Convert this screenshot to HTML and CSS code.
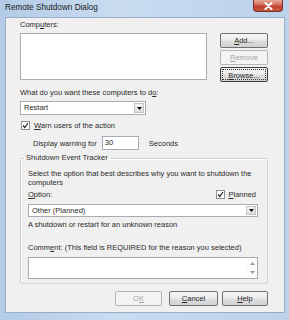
FILE: index.html
```html
<!DOCTYPE html>
<html lang="en">
<head>
  <meta charset="UTF-8" />
  <title>Remote Shutdown Dialog</title>
  <link rel="stylesheet" href="styles.css">
</head>
<body>
  <div class="window">
    <div class="titlebar">
      <span class="title">Remote Shutdown Dialog</span>
      <span class="close">
        <svg width="9" height="8" viewBox="0 0 9 8"><path d="M1.5 1 L7.5 7 M7.5 1 L1.5 7" stroke="#fff" stroke-width="2" stroke-linecap="round"/></svg>
      </span>
    </div>

    <div class="client">
      <div class="label">Comp<u>u</u>ters:</div>
      <div class="computers">
        <div class="listbox"></div>
        <div class="side-buttons">
          <button class="btn"><u>A</u>dd...</button>
          <button class="btn" disabled><u>R</u>emove</button>
          <button class="btn focus"><span><u>B</u>rowse...</span></button>
        </div>
      </div>

      <div class="label what">What do you want these computers to d<u>o</u>:</div>
      <div class="select action">
        <span class="value">Restart</span>
        <span class="arrow"><svg width="5" height="3" viewBox="0 0 5 3"><path d="M0 0 H5 L2.5 3 Z" fill="#000"/></svg></span>
      </div>

      <div class="check-row">
        <span class="checkbox"><svg width="7" height="7" viewBox="0 0 7 7"><path d="M1 3.5 L2.8 5.5 L6 1" fill="none" stroke="#222" stroke-width="1.2"/></svg></span>
        <span><u>W</u>arn users of the action</span>
      </div>

      <div class="warn-row">
        <span>Display warning for</span>
        <span class="textbox">30</span>
        <span>Seconds</span>
      </div>

      <fieldset class="group">
        <legend>Shutdown Event Tracker</legend>
        <div class="inner">
          <div class="desc">Select the option that best describes why you want to shutdown the computers</div>
          <div class="option-row">
            <span><u>O</u>ption:</span>
            <span class="planned">
              <span class="checkbox"><svg width="7" height="7" viewBox="0 0 7 7"><path d="M1 3.5 L2.8 5.5 L6 1" fill="none" stroke="#222" stroke-width="1.2"/></svg></span>
              <span><u>P</u>lanned</span>
            </span>
          </div>
          <div class="select reason">
            <span class="value">Other (Planned)</span>
            <span class="arrow"><svg width="5" height="3" viewBox="0 0 5 3"><path d="M0 0 H5 L2.5 3 Z" fill="#000"/></svg></span>
          </div>
          <div class="label note">A shutdown or restart for an unknown reason</div>
          <div class="label comment-label">Comm<u>e</u>nt: (This field is REQUIRED for the reason you selected)</div>
          <div class="comment">
            <span class="scroll">
              <svg width="5" height="3" viewBox="0 0 5 3"><path d="M0 3 H5 L2.5 0 Z" fill="#9a9a9a"/></svg>
              <svg width="5" height="3" viewBox="0 0 5 3"><path d="M0 0 H5 L2.5 3 Z" fill="#9a9a9a"/></svg>
            </span>
          </div>
        </div>
      </fieldset>

      <div class="footer">
        <button class="btn ok" disabled>O<u>K</u></button>
        <button class="btn cancel"><u>C</u>ancel</button>
        <button class="btn help"><u>H</u>elp</button>
      </div>
    </div>
  </div>
</body>
</html>
```

FILE: styles.css
```css
* {
  box-sizing: border-box;
}
body {
  margin: 0;
  font-family: 'Liberation Sans', Arial, sans-serif;
  font-size: 7.5px;
  color: #2a2a2a;
  background: #fff;
}

u {
  text-underline-offset: 1px;
}

.window {
  width: 289px;
  height: 320px;
  background: linear-gradient(to right, #b3cbe6, #c9dcf0 40%, #bcd2eb);
  overflow: hidden;
}

.titlebar {
  height: 17px;
  display: flex;
  justify-content: space-between;
  align-items: flex-start;
  padding: 0 6px 0 5px;
}

.title {
  font-size: 8.2px;
  line-height: 16px;
  color: #1a1a1a;
}

.close {
  width: 30px;
  height: 12px;
  display: flex;
  align-items: center;
  justify-content: center;
  background: linear-gradient(#e7a896, #d26a5a 45%, #c0402e 55%, #c9573f);
  border: 1px solid #7a3027;
  border-top: none;
  border-radius: 0 0 4px 4px;
}

.client {
  margin-left: 5px;
  width: 280px;
  height: 296px;
  background: #f0f0f0;
  border: 1px solid #98adc6;
  padding: 2px 16px 0 14px;
}

.label {
  line-height: 10px;
  height: 10px;
  white-space: nowrap;
}

.computers {
  display: flex;
  justify-content: space-between;
  margin-top: 3px;
}

.listbox {
  width: 187px;
  height: 47px;
  background: #fff;
  border: 1px solid #abadb3;
}

.side-buttons {
  display: flex;
  flex-direction: column;
  gap: 2px;
  width: 48px;
}

.btn {
  height: 15px;
  width: 48px;
  padding: 0;
  font: inherit;
  color: #2a2a2a;
  border: 1px solid #707070;
  border-radius: 2px;
  background: linear-gradient(#f4f4f4, #ececec 48%, #dfdfdf 52%, #d2d2d2);
}

.btn:disabled {
  color: #a3a3a3;
  border-color: #b5b5b5;
  background: #f4f4f4;
}

.btn.focus {
  border-color: #3a3a3a;
  padding: 1px;
}

.btn.focus span {
  display: block;
  height: 100%;
  line-height: 11px;
  border: 1px dotted #333;
}

.what {
  margin-top: 6px;
}

.select {
  display: flex;
  justify-content: space-between;
  align-items: stretch;
  background: #fff;
  border: 1px solid #a5acb5;
  padding: 1px;
}

.select .value {
  line-height: 10px;
  padding-left: 2px;
}

.select .arrow {
  width: 10px;
  display: flex;
  align-items: center;
  justify-content: center;
  background: linear-gradient(#f5f5f5, #dedede);
  border: 1px solid #c3c3c3;
}

.action {
  margin-top: 3px;
  width: 126px;
  height: 14px;
}

.check-row {
  margin-top: 5px;
  height: 10px;
  display: flex;
  align-items: center;
  gap: 4px;
  padding-left: 1px;
}

.checkbox {
  width: 9px;
  height: 9px;
  display: flex;
  align-items: center;
  justify-content: center;
  background: #fff;
  border: 1px solid #8e8f8f;
}

.warn-row {
  margin-top: 6px;
  height: 14px;
  display: flex;
  align-items: center;
  padding-left: 13px;
}

.textbox {
  width: 37px;
  height: 14px;
  line-height: 12px;
  margin: 0 10px 0 5px;
  padding-left: 2px;
  background: #fff;
  border: 1px solid #a5acb5;
}

.group {
  margin: 3px 0 0;
  padding: 0 5px 4px 3px;
  border: 1px solid #cfd3d6;
  border-radius: 2px;
  box-shadow: inset 1px 1px 0 #fff;
  min-width: 0;
}

.group legend {
  padding: 0 2px;
  line-height: 10px;
}

.inner {
  padding: 6px 4px 0;
}

.desc {
  line-height: 9px;
  margin-right: -4px;
}

.option-row {
  margin-top: 2px;
  height: 10px;
  display: flex;
  justify-content: space-between;
  align-items: center;
}

.planned {
  display: flex;
  align-items: center;
  gap: 3px;
  margin-right: 2px;
}

.reason {
  margin-top: 5px;
  height: 13px;
}

.reason .value {
  line-height: 9px;
}

.note {
  margin-top: 3px;
}

.comment-label {
  margin-top: 13px;
}

.comment {
  margin-top: 4px;
  height: 22px;
  display: flex;
  justify-content: flex-end;
  background: #fff;
  border: 1px solid #a5acb5;
}

.scroll {
  width: 10px;
  display: flex;
  flex-direction: column;
  justify-content: space-between;
  align-items: center;
  padding: 4px 0;
  background: #fafafa;
}

.footer {
  margin-top: 7px;
  display: flex;
  justify-content: flex-end;
}

.footer .ok {
  width: 47px;
}

.footer .cancel {
  width: 49px;
  margin-left: 7px;
}

.footer .help {
  width: 46px;
  margin-left: 4px;
}
```
